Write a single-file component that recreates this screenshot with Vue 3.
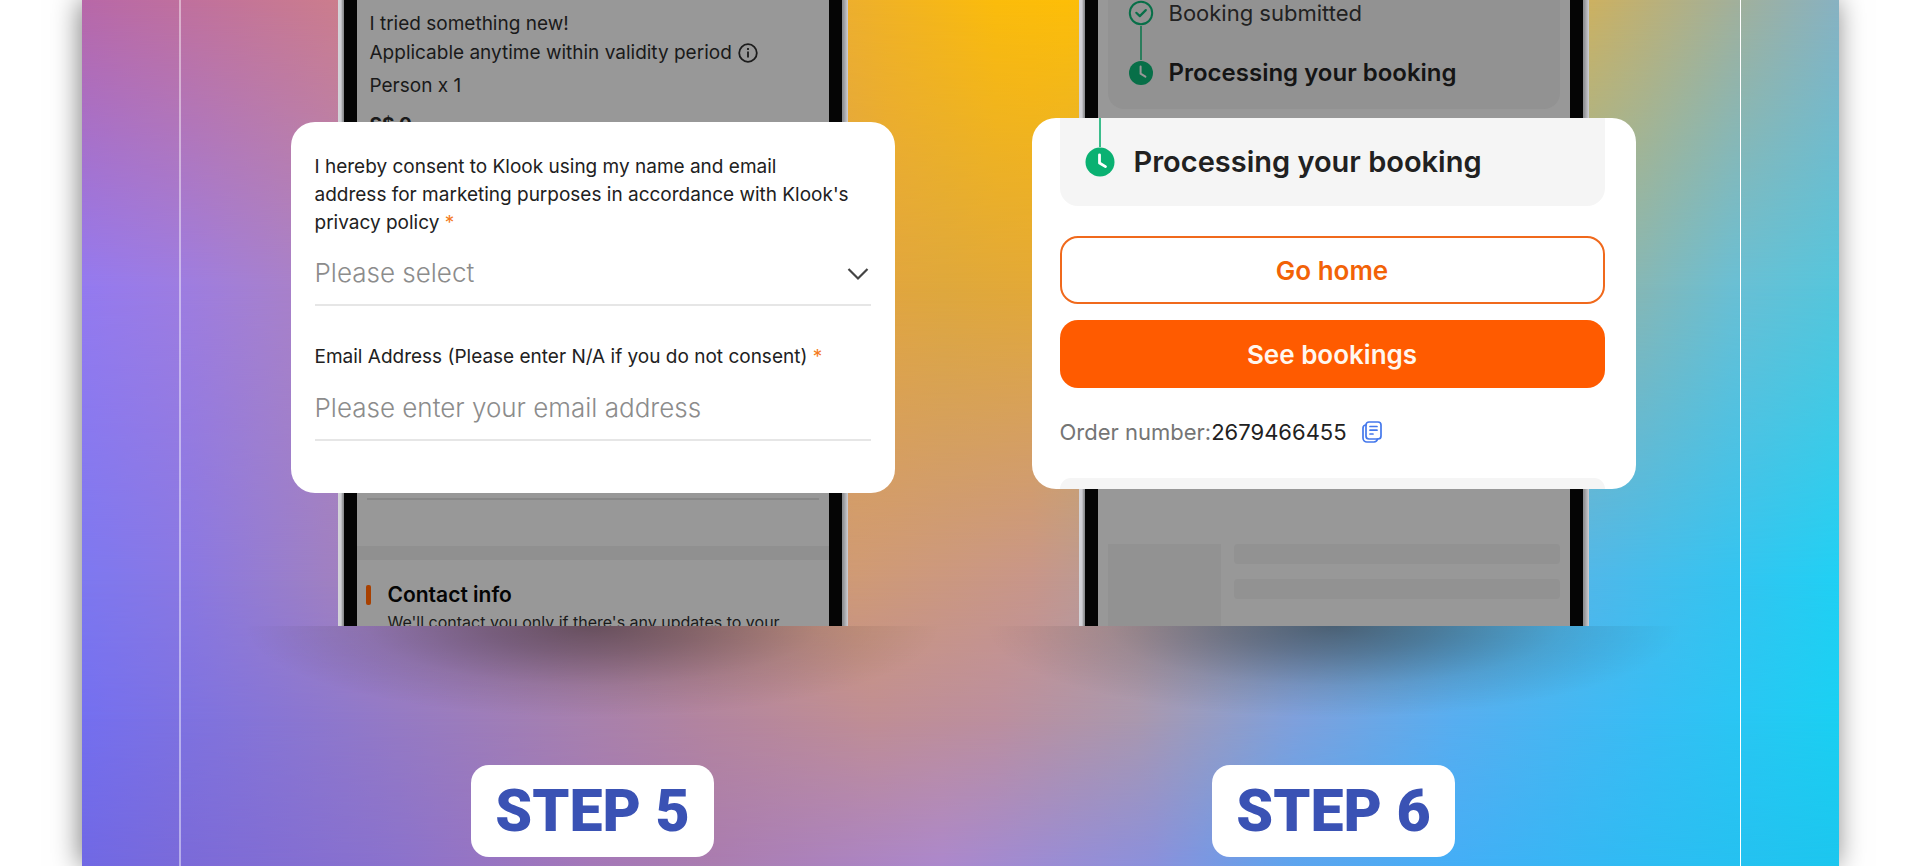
<template>
  <div class="page">
    <main class="poster">
      <div class="tint tint-1"></div>
      <div class="tint tint-2"></div>
      <div class="tint tint-3"></div>
      <div class="tint tint-4"></div>
      <div class="steps">
        <section class="step">
          <div class="phone">
            <div class="screen">
              <div class="details">
                <p>I tried something new!</p>
                <p class="with-icon">
                  Applicable anytime within validity period
                  <svg width="20" height="20" viewBox="0 0 20 20" fill="none" stroke="#1c1c1c" stroke-width="1.8">
                    <circle cx="10" cy="10" r="8.8" />
                    <path d="M10 8.6v6M10 5v2" />
                  </svg>
                </p>
                <p class="person">Person x 1</p>
                <p class="price">S$ 0</p>
              </div>
              <form class="card form-card" @submit.prevent>
                <label for="consent">
                  I hereby consent to Klook using my name and email<br />
                  address for marketing purposes in accordance with Klook's<br />
                  privacy policy
                  <span class="required">*</span>
                </label>
                <div class="select-wrap">
                  <select id="consent" v-model="consent">
                    <option value="">Please select</option>
                    <option value="yes">Yes</option>
                    <option value="no">No</option>
                  </select>
                  <svg class="chevron" width="22" height="14" viewBox="0 0 22 14" fill="none" stroke="#444" stroke-width="2.2">
                    <path d="M1.5 2l9.5 9.5L20.5 2" />
                  </svg>
                </div>
                <label class="email-label" for="email">
                  Email Address (Please enter N/A if you do not consent)
                  <span class="required">*</span>
                </label>
                <input id="email" v-model="email" type="text" placeholder="Please enter your email address" />
              </form>
              <div class="contact">
                <div class="divider"></div>
                <div class="band"></div>
                <h3>Contact info</h3>
                <p>We'll contact you only if there's any updates to your</p>
              </div>
            </div>
          </div>
          <div class="phone-shadow"></div>
          <h2>STEP 5</h2>
        </section>

        <section class="step">
          <div class="phone">
            <div class="screen">
              <div class="progress">
                <div class="progress-panel">
                  <div class="progress-row">
                    <svg width="26" height="26" viewBox="0 0 26 26" fill="none" stroke="#076f48" stroke-width="2">
                      <circle cx="13" cy="13" r="11.2" />
                      <path d="M8.3 12.8l3.5 3.3 6-6" stroke-width="2.2" stroke-linecap="round" stroke-linejoin="round" />
                    </svg>
                    <span>Booking submitted</span>
                  </div>
                  <div class="connector"></div>
                  <div class="progress-row current">
                    <svg width="26" height="26" viewBox="0 0 26 26" fill="none">
                      <circle cx="13" cy="13" r="12" fill="#076f48" />
                      <path d="M12.6 6.5v7.2l4.8 3" stroke="#989898" stroke-width="2" stroke-linecap="round" />
                    </svg>
                    <span>Processing your booking</span>
                  </div>
                </div>
              </div>
              <div class="card booking-card">
                <div class="status">
                  <div class="status-line"></div>
                  <div class="status-row">
                    <svg width="30" height="30" viewBox="0 0 30 30" fill="none">
                      <circle cx="15" cy="15" r="14.5" fill="#0ab172" />
                      <path d="M14.5 7.8v8.2l6 3.6" stroke="#fff" stroke-width="2.8" stroke-linecap="round" stroke-linejoin="round" />
                    </svg>
                    <span>Processing your booking</span>
                  </div>
                </div>
                <button type="button" class="outline">Go home</button>
                <button type="button" class="solid">See bookings</button>
                <div class="order">
                  <span class="order-label">Order number:</span><span>2679466455</span>
                  <button type="button" class="copy" aria-label="Copy order number">
                    <svg width="20" height="22" viewBox="0 0 20 22" fill="none" stroke="#4478ec" stroke-width="1.7" stroke-linecap="round" stroke-linejoin="round">
                      <path d="M7 1h9a3 3 0 0 1 3 3v11a3 3 0 0 1-3 3H7a3 3 0 0 1-3-3V4a3 3 0 0 1 3-3z" />
                      <path d="M4 4a3 3 0 0 0-3 3v10a4 4 0 0 0 4 4h7a4 4 0 0 0 3.5-3" />
                      <path d="M8 5.5h7M8 9.2h7M8 13h3" />
                    </svg>
                  </button>
                </div>
                <div class="next-panel"></div>
              </div>
              <div class="skeleton">
                <div class="thumb"></div>
                <div class="bars">
                  <div class="bar"></div>
                  <div class="bar"></div>
                </div>
              </div>
            </div>
          </div>
          <div class="phone-shadow"></div>
          <h2>STEP 6</h2>
        </section>
      </div>
    </main>
  </div>
</template>

<script setup>
import { ref } from 'vue';

const consent = ref('');
const email = ref('');
</script>

<style>
body {
  margin: 0;
  background: #fff;
}
</style>

<style scoped>
* {
  box-sizing: border-box;
}

.page {
  padding: 0 82px;
  overflow: hidden;
  font-family: Inter, "Noto Sans", sans-serif;
  color: #212121;
}

p,
h2,
h3 {
  margin: 0;
}

.poster {
  position: relative;
  min-height: 100vh;
  padding: 0 98px 0 97px;
  box-shadow: -2px 0 26px rgba(0, 0, 0, 0.5);
  background: linear-gradient(90deg, #b868a8 0%, #cb7c8e 14%, #eeb02c 44%, #fbbc0c 52%, #fdbe08 56%, #ccb162 86%, #a3b09a 94%, #88b2c2 100%);
}

/* each tint takes over from the one before it further down the poster */
.tint {
  position: absolute;
  inset: 0;
}

.tint-1 {
  background: linear-gradient(90deg, #947af0 0%, #9e7de0 6%, #aa82c6 13%, #e2a63e 46%, #dfa83c 49%, #e3a937 54%, #84b8b8 89%, #6abfd4 94%, #55c6dc 100%);
  mask-image: linear-gradient(transparent 0%, #000 33%);
}

.tint-2 {
  background: linear-gradient(90deg, #7d78f0 0%, #8a78e2 6%, #9f80c2 14%, #cf9a76 44%, #c8968a 54%, #4fb8ea 86%, #34c4f0 94%, #20d0f4 100%);
  mask-image: linear-gradient(transparent 33%, #000 67%);
}

.tint-3 {
  background: linear-gradient(90deg, #746ff0 0%, #7e72e0 6%, #957ac4 18%, #b284a0 35%, #c08e94 45%, #bc8f9e 52%, #aa98ae 60%, #7fa0dc 69%, #58aef0 78%, #38bdf4 89%, #1ad0f2 100%);
  mask-image: linear-gradient(transparent 67%, #000 83%);
}

.tint-4 {
  background: linear-gradient(90deg, #7068e4 0%, #7b6ad8 6%, #8b72cc 18%, #a477b8 29%, #aa7cb0 36%, #ac88cc 49%, #8a90dc 61%, #5ca4ee 69%, #44aef6 78%, #2ebcf2 89%, #1cc6ee 100%);
  mask-image: linear-gradient(transparent 83%, #000 100%);
}

.steps {
  position: relative;
  min-height: 100vh;
  display: grid;
  grid-template-columns: 1fr 1fr;
  padding: 0 36px 0 41px;
  border-left: 2px solid rgba(255, 255, 255, 0.45);
  border-right: 1px solid #fff;
}

.step {
  display: flex;
  flex-direction: column;
  align-items: center;
}

.phone {
  width: 70%;
  max-width: 510px;
  padding: 0 6px;
  background: linear-gradient(90deg, #d5d5da 0, #cfcfd4 3px, #8f9092 5px, #8f9092 calc(100% - 5px), #cfcfd4 100%);
}

.screen {
  border: solid #050505;
  border-width: 0 13px;
  background: #989898;
}

.details {
  height: 122px;
  padding: 9px 13px 0;
  overflow: hidden;
  font-size: 19px;
  line-height: 29px;
  color: #1a1a1a;
  white-space: nowrap;
}

.with-icon {
  display: flex;
  align-items: center;
  gap: 6px;
}

.person {
  margin-top: 4px;
}

.price {
  margin-top: 10px;
  font-weight: 700;
}

.card {
  position: relative;
  margin: 0 -66px;
  border-radius: 24px;
  background: #fff;
  overflow: hidden;
}

.form-card {
  display: flex;
  flex-direction: column;
  padding: 31px 24px 52px;
}

label {
  font-size: 19px;
  line-height: 28px;
}

.required {
  color: #f47b20;
}

.select-wrap {
  position: relative;
  margin-top: 7px;
}

select,
input {
  width: 100%;
  height: 62px;
  padding: 0 0 4px;
  border: 0;
  border-bottom: 2px solid #e6e6e6;
  border-radius: 0;
  background: transparent;
  font-family: inherit;
  font-size: 26px;
  font-weight: 300;
  color: #8c8c8c;
  outline: none;
}

select {
  appearance: none;
}

input::placeholder {
  color: #8c8c8c;
  opacity: 1;
}

.chevron {
  position: absolute;
  top: 23px;
  right: 2px;
  pointer-events: none;
}

.email-label {
  margin-top: 37px;
}

input {
  margin-top: 8px;
}

.contact {
  height: 133px;
  padding-top: 5px;
  overflow: hidden;
  color: #1a1a1a;
}

.divider {
  height: 2px;
  margin: 0 10px;
  background: #888;
}

.band {
  height: 14px;
  margin-top: 46px;
  background: #909090;
}

.contact h3 {
  display: flex;
  align-items: center;
  gap: 17px;
  margin: 21px 9px 0;
  font-size: 21px;
  font-weight: 600;
  line-height: 28px;
  color: #050505;
}

.contact h3::before {
  content: "";
  width: 5px;
  height: 20px;
  border-radius: 2px;
  background: #a84000;
}

.contact p {
  padding-left: 31px;
  font-size: 16px;
  line-height: 26px;
  white-space: nowrap;
}

.phone-shadow {
  width: 94%;
  height: 139px;
  background: radial-gradient(ellipse 50% 66% at 50% 0, rgba(0, 0, 0, 0.42) 0%, rgba(0, 0, 0, 0.29) 30%, rgba(0, 0, 0, 0.1) 65%, transparent 100%);
}

h2 {
  padding: 0 24px;
  border-radius: 18px;
  background: #fff;
  font-family: Roboto, Inter, sans-serif;
  font-size: 59px;
  font-weight: 900;
  line-height: 92px;
  color: #3a52b4;
}

.progress {
  height: 118px;
  padding: 0 10px;
}

.progress-panel {
  height: 109px;
  padding-left: 20px;
  border-radius: 0 0 16px 16px;
  background: #929292;
}

.progress-row {
  display: flex;
  align-items: center;
  gap: 15px;
  height: 26px;
  font-size: 22px;
  line-height: 26px;
  color: #222;
  white-space: nowrap;
}

.progress-row.current {
  font-size: 24px;
  font-weight: 600;
  color: #151515;
}

.connector {
  width: 2px;
  height: 34px;
  margin-left: 12px;
  background: #2a7d5c;
}

.booking-card {
  display: flex;
  flex-direction: column;
  padding: 0 31px 0 28px;
}

.status {
  height: 88px;
  padding-left: 25px;
  border-radius: 0 0 18px 18px;
  background: #f5f5f5;
}

.status-line {
  width: 2px;
  height: 29px;
  margin-left: 14px;
  background: #3cbd8c;
}

.status-row {
  display: flex;
  align-items: center;
  gap: 19px;
  height: 30px;
  font-size: 29px;
  font-weight: 600;
  line-height: 30px;
  white-space: nowrap;
}

button {
  border: 0;
  padding: 0;
  background: none;
  font-family: inherit;
  cursor: pointer;
}

.outline,
.solid {
  height: 68px;
  border-radius: 18px;
  font-size: 26px;
  font-weight: 600;
}

.outline {
  margin-top: 30px;
  border: 2px solid #f0691c;
  color: #f26207;
}

.solid {
  margin-top: 16px;
  background: #ff5b00;
  color: #fff7ef;
}

.order {
  display: flex;
  align-items: center;
  height: 28px;
  margin-top: 30px;
  font-size: 22px;
  white-space: nowrap;
}

.order-label {
  color: #757575;
}

.copy {
  display: flex;
  margin-left: 15px;
}

.next-panel {
  height: 11px;
  margin-top: 32px;
  border-radius: 18px 18px 0 0;
  background: #f5f5f5;
}

.skeleton {
  display: flex;
  gap: 13px;
  height: 137px;
  padding: 55px 10px 0;
}

.thumb {
  width: 25%;
  background: #929292;
}

.bars {
  flex: 1;
  display: flex;
  flex-direction: column;
  gap: 15px;
}

.bar {
  height: 20px;
  border-radius: 4px;
  background: #929292;
}
</style>
